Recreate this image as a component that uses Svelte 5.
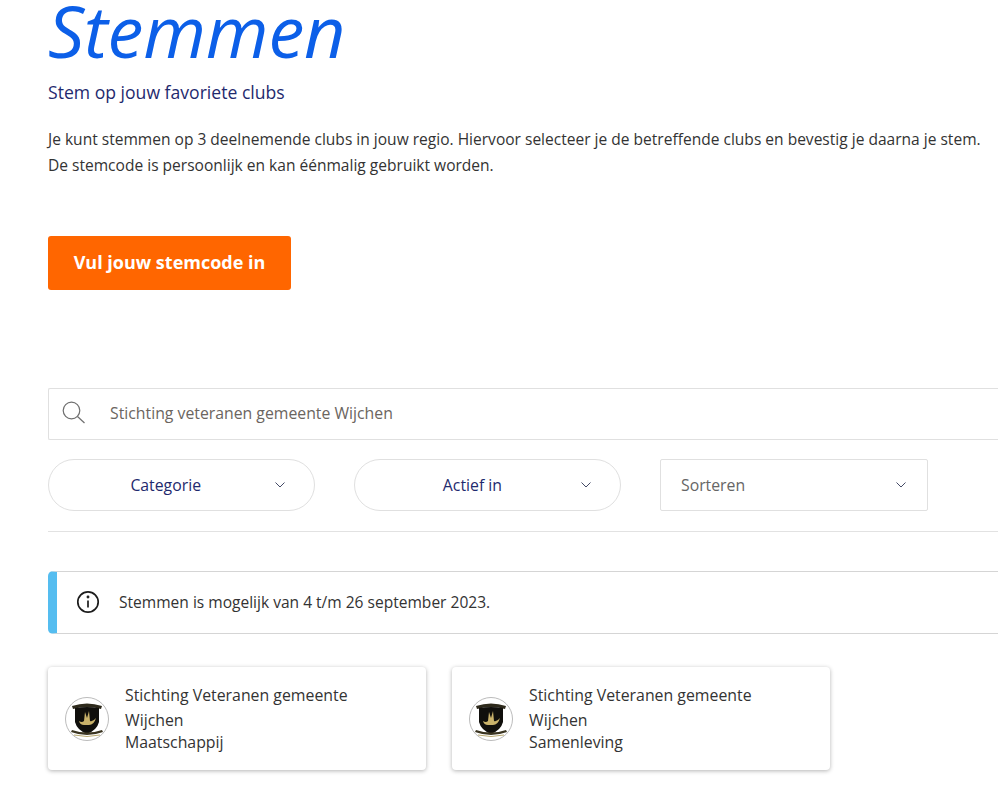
<script>
  const clubs = [
    { name: 'Stichting Veteranen gemeente Wijchen', category: 'Maatschappij' },
    { name: 'Stichting Veteranen gemeente Wijchen', category: 'Samenleving' }
  ];
</script>

<main class="page">
  <h1>Stemmen</h1>
  <p class="sub">Stem op jouw favoriete clubs</p>
  <p class="intro">Je kunt stemmen op 3 deelnemende clubs in jouw regio. Hiervoor selecteer je de betreffende clubs en bevestig je daarna je stem.<br />De stemcode is persoonlijk en kan éénmalig gebruikt worden.</p>
  <button class="cta">Vul jouw stemcode in</button>

  <div class="search">
    <svg width="26" height="26" viewBox="0 0 26 26" fill="none" stroke="#6f6f6f" stroke-width="1.2"><circle cx="10.500" cy="10.500" r="8.300" /><path d="M16.500 16.500l7 6.500" /></svg>
    <span>Stichting veteranen gemeente Wijchen</span>
  </div>

  <div class="filters">
    <div class="pill"><span>Categorie</span><svg class="chev" width="10" height="6" viewBox="0 0 10 6"><path d="M.5.5 5 5 9.500.5" /></svg></div>
    <div class="pill"><span>Actief in</span><svg class="chev" width="10" height="6" viewBox="0 0 10 6"><path d="M.5.5 5 5 9.500.5" /></svg></div>
    <div class="sort"><span>Sorteren</span><svg class="chev" width="10" height="6" viewBox="0 0 10 6"><path d="M.5.5 5 5 9.500.5" /></svg></div>
  </div>

  <div class="notice">
    <svg width="24" height="24" viewBox="0 0 24 24" fill="none" stroke="#1c1c1c" stroke-width="1.7"><circle cx="12" cy="12" r="10.200" /><path d="M12 10.500v7" /><circle cx="12" cy="7" r=".6" fill="#1c1c1c" /></svg>
    <span>Stemmen is mogelijk van 4 t/m 26 september 2023.</span>
  </div>

  <div class="cards">
    {#each clubs as club}
      <article class="card">
        <svg class="logo" width="44" height="44" viewBox="0 0 44 44">
          <circle cx="22" cy="22" r="21.500" fill="#fff" stroke="#bbb" />
          <path d="M7 9q15-5 30 0l-1 3q-14-4-28 0z" fill="#2e2a1c" />
          <path d="M10 11q12-2 24 0v14q-2 8-12 12q-10-4-12-12z" fill="#100f0c" />
          <path d="M14 24q3 2 5 0l1-9 2 6 2-7 1 10q3 1 6-3q-2 7-7 7h-5q-4 0-5-4z" fill="#c9b26a" />
          <path d="M6 35q16 6 32 0l-1-2q-15 5-30 0z" fill="#3a3420" />
          <path d="M9 38q13 3 26 0" fill="none" stroke="#b8a870" stroke-width="1" />
        </svg>
        <div class="info">
          <div class="name">{club.name}</div>
          <div class="cat">{club.category}</div>
        </div>
      </article>
    {/each}
  </div>
</main>

<style>
  :global(body) { margin: 0; background: #fff; overflow: hidden; }
  .page {
    width: 998px;
    height: 800px;
    overflow: hidden;
    box-sizing: border-box;
    padding-left: 48px;
    font-family: "Open Sans", "Noto Sans", sans-serif;
    color: #333;
  }
  h1 {
    margin: 0;
    font-size: 72px;
    line-height: 60px;
    font-weight: 400;
    font-style: italic;
    color: #0c5fe8;
    letter-spacing: -.2px;
  }
  .sub { margin: 20px 0 0; font-size: 17.600px; line-height: 24px; color: #1f2a6e; }
  .intro { margin: 22px 0 0; width: 950px; font-size: 15.550px; line-height: 26px; color: #333; white-space: nowrap; }
  .cta {
    display: block;
    margin: 58px 0 0;
    width: 243px;
    height: 54px;
    padding: 0 0 2px;
    border: 0;
    border-radius: 3px;
    background: #ff6600;
    color: #fff;
    font: 700 18px "Open Sans", sans-serif;
  }
  .search {
    display: flex;
    align-items: center;
    gap: 23px;
    margin-top: 98px;
    width: 950px;
    height: 52px;
    box-sizing: border-box;
    padding: 0 0 2px 12px;
    border: 1px solid #e0e0e0;
    border-right: 0;
    border-radius: 2px 0 0 2px;
    font-size: 15.800px;
    color: #6b6560;
  }
  .filters { display: flex; gap: 39px; margin-top: 19px; padding-bottom: 20px; border-bottom: 1px solid #e2e2e2; width: 950px; }
  .pill, .sort {
    display: flex;
    align-items: center;
    box-sizing: border-box;
    width: 267px;
    height: 52px;
    border: 1px solid #e0e0e0;
    font-size: 15.800px;
  }
  .pill { border-radius: 26px; color: #1f2a6e; justify-content: flex-end; gap: 74px; padding-right: 29px; }
  .pill:nth-child(2) { gap: 79px; }
  .sort { width: 268px; border-radius: 2px; color: #666; justify-content: space-between; padding: 0 21px 0 20px; }
  .chev { fill: none; stroke: #444a66; stroke-width: 1; }
  .notice {
    display: flex;
    align-items: center;
    gap: 19px;
    margin-top: 39px;
    width: 950px;
    height: 63px;
    box-sizing: border-box;
    padding: 0 0 2px 19px;
    border: 1px solid #d5d5d5;
    border-right: 0;
    border-left: 9px solid #55bdf0;
    border-radius: 5px 0 0 5px;
    font-size: 15.550px;
    color: #333;
  }
  .cards { display: flex; gap: 26px; margin-top: 33px; }
  .card {
    display: flex;
    align-items: center;
    gap: 16px;
    box-sizing: border-box;
    width: 378px;
    height: 103px;
    padding: 0 60px 2px 17px;
    border-radius: 4px;
    background: #fff;
    box-shadow: 0 1px 4px rgba(0,0,0,.3);
    font-size: 15.850px;
  }
  .logo { flex: none; margin-top: 2px; }
  .name { line-height: 25px; }
  .cat { line-height: 19px; }
</style>
